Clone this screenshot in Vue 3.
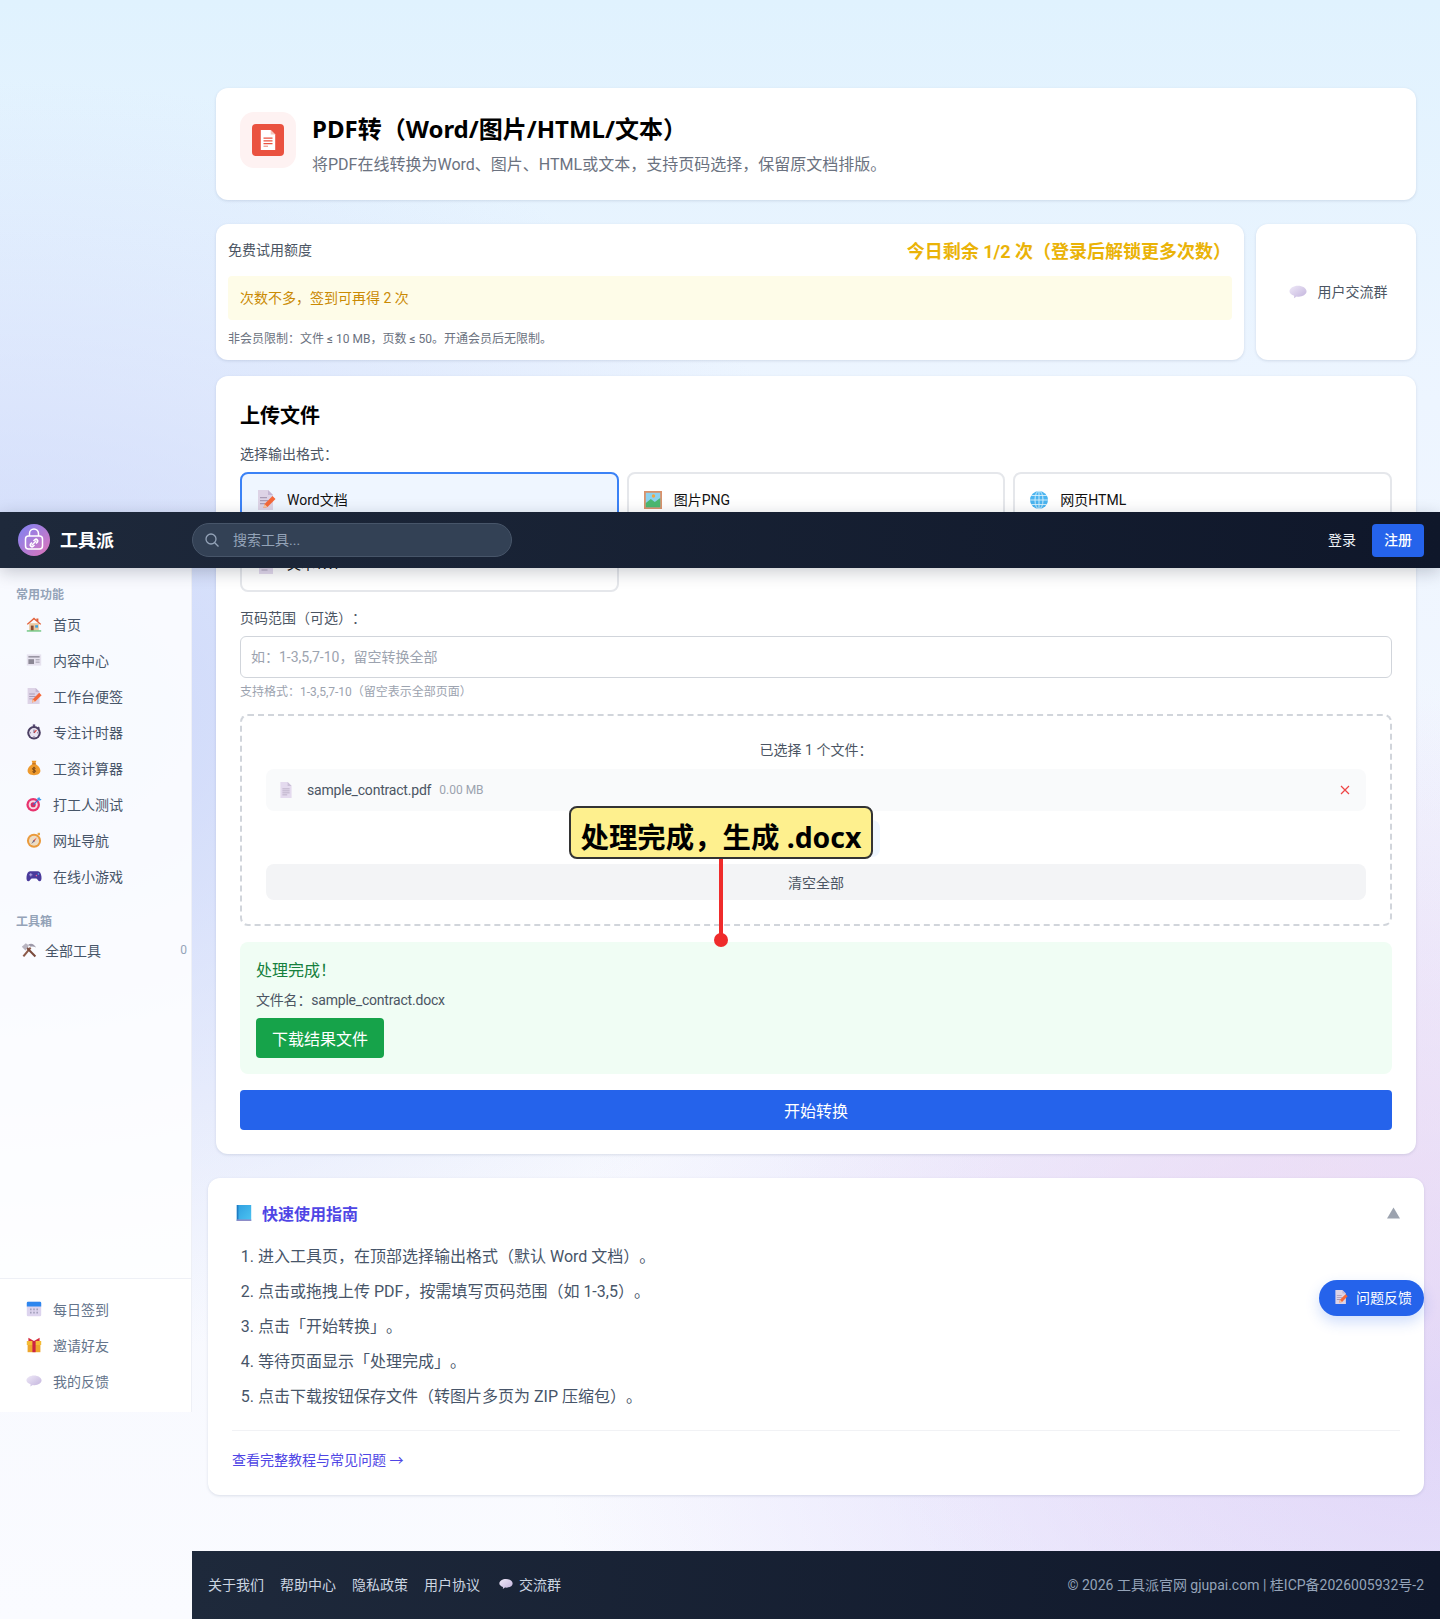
<script setup>
const navMain = [
  { icon: 'home', label: '首页' },
  { icon: 'news', label: '内容中心' },
  { icon: 'memo', label: '工作台便签' },
  { icon: 'timer', label: '专注计时器' },
  { icon: 'money', label: '工资计算器' },
  { icon: 'target', label: '打工人测试' },
  { icon: 'compass', label: '网址导航' },
  { icon: 'game', label: '在线小游戏' }
]
const navBottom = [
  { icon: 'calendar', label: '每日签到' },
  { icon: 'gift', label: '邀请好友' },
  { icon: 'bubble', label: '我的反馈' }
]
const formats = [
  { icon: 'memo', label: 'Word文档', active: true },
  { icon: 'image', label: '图片PNG' },
  { icon: 'globe', label: '网页HTML' },
  { icon: 'doc', label: '文本TXT' }
]
const steps = [
  '进入工具页，在顶部选择输出格式（默认 Word 文档）。',
  '点击或拖拽上传 PDF，按需填写页码范围（如 1-3,5）。',
  '点击「开始转换」。',
  '等待页面显示「处理完成」。',
  '点击下载按钮保存文件（转图片多页为 ZIP 压缩包）。'
]
const footerLinks = ['关于我们', '帮助中心', '隐私政策', '用户协议']
</script>

<template>
  <div class="page">
    <svg class="defs" width="0" height="0" aria-hidden="true">
      <defs>
        <linearGradient id="bubble-fill" x1="0" y1="0" x2="1" y2="1">
          <stop offset="0" stop-color="#efe9f8" />
          <stop offset="1" stop-color="#c2b3dc" />
        </linearGradient>
        <linearGradient id="book-fill" x1="0" y1="0" x2="1" y2="1">
          <stop offset="0" stop-color="#2f9fe0" />
          <stop offset="1" stop-color="#4cc4f2" />
        </linearGradient>
        <linearGradient id="logo-fill" x1="0" y1="0" x2="1" y2="1">
          <stop offset="0" stop-color="#7c83f4" />
          <stop offset="1" stop-color="#e074b8" />
        </linearGradient>
      </defs>
      <symbol id="i-home" viewBox="0 0 20 20">
        <rect x="4" y="9" width="12" height="9" fill="#eac8a0" />
        <path d="M1 10 10 2l3 2.600V3h2.500v3.800L19 10l-1.200 1L10 4.400 2.200 11z" fill="#e2603a" />
        <rect x="6" y="12" width="3.500" height="6" fill="#8a4b32" />
        <rect x="11.500" y="11.500" width="3.500" height="3" fill="#3aa0e0" />
        <rect x="1" y="18" width="18" height="1.400" fill="#4cb860" />
      </symbol>
      <symbol id="i-news" viewBox="0 0 20 20">
        <rect x="1" y="3" width="18" height="14" fill="#e6e2ee" />
        <rect x="3" y="5" width="14" height="2" fill="#9a96a4" />
        <rect x="3" y="9" width="7" height="6" fill="#8b8794" />
        <rect x="12" y="9" width="5" height="1.400" fill="#aaa6b4" />
        <rect x="12" y="12" width="5" height="1.400" fill="#aaa6b4" />
      </symbol>
      <symbol id="i-memo" viewBox="0 0 20 20">
        <path d="M2 0h10l5 5v15H2z" fill="#ddd3e6" />
        <path d="M12 0l5 5h-5z" fill="#c4b6d2" />
        <path d="M4 7h7v1.200H4zM4 10h8v1.200H4zM4 13h5v1.200H4z" fill="#a99bb5" />
        <path d="M7.500 18l1-4 8-8 3 3-8 8z" fill="#f4683a" />
        <path d="M7.500 18l1-4 3 3z" fill="#f6c6a0" />
      </symbol>
      <symbol id="i-timer" viewBox="0 0 20 20">
        <rect x="8.500" y="0.500" width="3" height="3" fill="#5b4c78" />
        <path d="M15.500 3l2 2-1.500 1.500-2-2z" fill="#5b4c78" />
        <circle cx="10" cy="11" r="8.500" fill="#4b3f63" />
        <circle cx="10" cy="11" r="6" fill="#e9e3f1" />
        <path d="M10 11l3-3.400" stroke="#e0433c" stroke-width="1.500" />
        <path d="M10 11V7M10 15v1M5 11h1M14 11h1" stroke="#4b3f63" stroke-width="1" />
      </symbol>
      <symbol id="i-money" viewBox="0 0 20 20">
        <path d="M7 1h6l-1.500 4c3.500 1.500 6.500 5 6.500 8.500 0 3.500-3 5.500-8 5.500s-8-2-8-5.500C2 10 5 6.500 8.500 5z" fill="#ee9a2e" />
        <path d="M7.500 4.800h5" stroke="#b8681e" stroke-width="1.300" />
        <path d="M12 10.500c-1-1-4-1-4 .6 0 1.800 4 1 4 2.800 0 1.600-3 1.600-4 .6M10 8.500v8" stroke="#5e3312" stroke-width="1" fill="none" />
      </symbol>
      <symbol id="i-target" viewBox="0 0 20 20">
        <circle cx="9" cy="11" r="8.500" fill="#e8336e" />
        <circle cx="9" cy="11" r="5.700" fill="#f4d8e4" />
        <circle cx="9" cy="11" r="3.200" fill="#d62c62" />
        <path d="M9 11 16 4" stroke="#3a6fd8" stroke-width="1.500" />
        <path d="M14 2.500l1 2.500 2.500 1 2-2-2-.5-.5-2z" fill="#3f9be8" />
      </symbol>
      <symbol id="i-compass" viewBox="0 0 20 20">
        <circle cx="10" cy="11" r="8.800" fill="#ea9a3c" />
        <circle cx="10" cy="11" r="6.300" fill="#ecdcc4" />
        <path d="M13.500 7l-3 5-1.500-1.500z" fill="#e0443c" />
        <path d="M6.500 15l3-5 1.500 1.500z" fill="#6a6a88" />
        <rect x="14.500" y="1" width="3" height="3" fill="#e8a848" />
      </symbol>
      <symbol id="i-game" viewBox="0 0 20 20">
        <path d="M5 4h10c2.500 0 3.800 3 4.300 6.500.4 3.500-.3 6-2.300 6-1.800 0-2.500-2.800-4-3.500H7c-1.500.7-2.200 3.500-4 3.500-2 0-2.700-2.500-2.300-6C1.200 7 2.500 4 5 4z" fill="#4a3a9c" />
        <path d="M4 8.500h4M6 6.500v4" stroke="#b8aee8" stroke-width="1.200" />
        <circle cx="13" cy="9.500" r="1" fill="#e8609a" />
        <circle cx="15.500" cy="7.500" r="1" fill="#58b8f0" />
      </symbol>
      <symbol id="i-tools" viewBox="0 0 20 20">
        <path d="M3 18 12 7" stroke="#8c5a4a" stroke-width="2.600" />
        <path d="M18 18 7 7" stroke="#7a4a3c" stroke-width="2.600" />
        <path d="M1 6l5-4.500 4 3-4.500 6z" fill="#b8b4c0" />
        <path d="M9 3c4-2 7-1 10 4-2.500-1.500-5-2-7-1z" fill="#9c98a8" />
      </symbol>
      <symbol id="i-calendar" viewBox="0 0 20 20">
        <rect x="1" y="1" width="18" height="18" rx="1.500" fill="#ddd4ee" />
        <path d="M1 7V2.500A1.500 1.500 0 0 1 2.500 1h15A1.500 1.500 0 0 1 19 2.500V7z" fill="#2e86ee" />
        <path d="M5 9.500h2v2H5zM9 9.500h2v2H9zM13 9.500h2v2h-2zM5 13.500h2v2H5zM9 13.500h2v2H9zM13 13.500h2v2h-2z" fill="#a4a0bc" />
      </symbol>
      <symbol id="i-gift" viewBox="0 0 20 20">
        <rect x="2" y="9" width="16" height="10" fill="#eda62c" />
        <rect x="1" y="5" width="18" height="5" fill="#f4bc36" />
        <rect x="8" y="5" width="4" height="14" fill="#cc2244" />
        <path d="M3 1l7 4 7-4v4H3z" fill="#d62c3c" />
      </symbol>
      <symbol id="i-bubble" viewBox="0 0 20 20">
        <path d="M10 3c5 0 9.500 2.700 9.500 6.200s-4.500 6-8.500 6c-1 0-1.800 0-2.500-.2L5.500 17l.2-2.800C3 13.200 .5 11.500 .5 9.200.5 5.700 5 3 10 3z" fill="url(#bubble-fill)" />
      </symbol>
      <symbol id="i-doc" viewBox="0 0 20 20">
        <path d="M3 0h9l5 5v15H3z" fill="#e4daee" />
        <path d="M12 0l5 5h-5z" fill="#cbbfd8" />
        <path d="M5.500 8h9v1h-9zM5.500 10.500h9v1h-9zM5.500 13h9v1h-9zM5.500 15.500h6v1h-6z" fill="#b0a4bc" />
      </symbol>
      <symbol id="i-image" viewBox="0 0 20 20">
        <rect x="1" y="1" width="18" height="18" fill="#d9926b" />
        <rect x="2.800" y="2.800" width="14.400" height="14.400" fill="#8ed2ee" />
        <path d="M2.800 13l5-4 4 3 5.400-4v9.200H2.800z" fill="#4cb870" />
        <circle cx="10.500" cy="6" r="1.700" fill="#f2a640" />
      </symbol>
      <symbol id="i-globe" viewBox="0 0 20 20">
        <circle cx="10" cy="10" r="9" fill="#4ab4f0" />
        <g fill="none" stroke="#d8f0fc" stroke-width="0.900">
          <ellipse cx="10" cy="10" rx="4" ry="9" />
          <path d="M10 1v18M1 10h18M2.200 5.500h15.600M2.200 14.500h15.600" />
        </g>
      </symbol>
      <symbol id="i-book" viewBox="0 0 20 20">
        <rect x="1" y="0" width="18" height="20" fill="url(#book-fill)" />
        <rect x="1" y="0" width="2" height="20" fill="#1f7cc4" />
        <rect x="1" y="18" width="18" height="2" fill="#8d8cc8" />
      </symbol>
    </svg>

    <aside class="sidebar">
      <div class="nav-top">
        <p class="nav-title">常用功能</p>
        <a v-for="item in navMain" :key="item.label" class="nav-item">
          <svg class="nav-icon"><use :href="'#i-' + item.icon" /></svg>
          <span>{{ item.label }}</span>
        </a>
        <p class="nav-title nav-title-2">工具箱</p>
        <a class="nav-item nav-tools">
          <svg class="nav-icon"><use href="#i-tools" /></svg>
          <span>全部工具</span>
          <em class="count">0</em>
        </a>
      </div>
      <div class="nav-bottom">
        <a v-for="item in navBottom" :key="item.label" class="nav-item muted">
          <svg class="nav-icon"><use :href="'#i-' + item.icon" /></svg>
          <span>{{ item.label }}</span>
        </a>
      </div>
    </aside>

    <div class="main">
      <div class="content">
        <section class="card head-card">
          <div class="head-icon">
            <div class="head-icon-inner">
              <svg viewBox="0 0 20 24" width="18" height="22">
                <path d="M2 1h11l5 5v17H2z" fill="#fff" />
                <path d="M13 1l5 5h-5z" fill="#f7c4bb" />
                <path d="M5 10h10M5 13h10M5 16h10" stroke="#e9523f" stroke-width="1.300" />
                <path d="M5 19h5" stroke="#f2a79c" stroke-width="1.600" />
              </svg>
            </div>
          </div>
          <div>
            <h1>PDF转（Word/图片/HTML/文本）</h1>
            <p class="head-sub">将PDF在线转换为Word、图片、HTML或文本，支持页码选择，保留原文档排版。</p>
          </div>
        </section>

        <div class="quota-row">
          <section class="card quota-card">
            <div class="quota-top">
              <span class="quota-name">免费试用额度</span>
              <strong>今日剩余 1/2 次（登录后解锁更多次数）</strong>
            </div>
            <div class="quota-tip">次数不多，签到可再得 2 次</div>
            <p class="quota-note">非会员限制：文件 ≤ 10 MB，页数 ≤ 50。开通会员后无限制。</p>
          </section>
          <section class="card group-card">
            <svg class="group-icon"><use href="#i-bubble" /></svg>
            <span>用户交流群</span>
          </section>
        </div>

        <section class="card upload-card">
          <h2>上传文件</h2>
          <p class="label">选择输出格式：</p>
          <div class="formats">
            <div v-for="f in formats" :key="f.label" class="format" :class="{ active: f.active }">
              <svg class="format-icon"><use :href="'#i-' + f.icon" /></svg>
              <span>{{ f.label }}</span>
            </div>
          </div>

          <p class="label range-label">页码范围（可选）：</p>
          <input class="range-input" type="text" placeholder="如：1-3,5,7-10，留空转换全部" />
          <p class="hint">支持格式：1-3,5,7-10（留空表示全部页面）</p>

          <div class="dropzone">
            <p class="picked">已选择 1 个文件：</p>
            <div class="file-row">
              <svg class="file-icon"><use href="#i-doc" /></svg>
              <span class="file-name">sample_contract.pdf</span>
              <span class="file-size">0.00 MB</span>
              <svg class="file-del" viewBox="0 0 10 10" width="10" height="10">
                <path d="M1 1l8 8M9 1l-8 8" stroke="#ef4444" stroke-width="1.200" />
              </svg>
            </div>
            <div class="add-wrap"><div class="btn-add"></div></div>
            <button class="btn-clear">清空全部</button>
          </div>

          <div class="result">
            <p class="result-title">处理完成！</p>
            <p class="result-file">文件名：sample_contract.docx</p>
            <button class="btn-download">下载结果文件</button>
          </div>

          <button class="btn-start">开始转换</button>
        </section>
      </div>

      <section class="card guide">
        <div class="guide-head">
          <svg class="guide-icon"><use href="#i-book" /></svg>
          <span>快速使用指南</span>
          <svg class="guide-arrow" viewBox="0 0 14 12"><polygon points="7,0 14,12 0,12" fill="#9ca3af" /></svg>
        </div>
        <ol class="guide-list">
          <li v-for="s in steps" :key="s">{{ s }}</li>
        </ol>
        <div class="guide-foot">
          <a>查看完整教程与常见问题 →</a>
        </div>
      </section>

      <footer class="footer">
        <div class="footer-links">
          <a v-for="l in footerLinks" :key="l">{{ l }}</a>
          <a class="footer-group">
            <svg class="footer-icon"><use href="#i-bubble" /></svg>
            交流群
          </a>
        </div>
        <span class="copyright">© 2026 工具派官网 gjupai.com | 桂ICP备2026005932号-2</span>
      </footer>
    </div>

    <header class="topbar">
      <div class="logo">
        <svg viewBox="0 0 32 32" width="32" height="32">
          <circle cx="16" cy="16" r="16" fill="url(#logo-fill)" />
          <g fill="none" stroke="#fff" stroke-width="1.500">
            <path d="M11.500 12V9.500a4.500 4.500 0 0 1 9 0V12" />
            <rect x="7.500" y="12" width="17" height="13" rx="3" />
            <path d="M13.500 21.500l5-5" />
            <path d="M14 18.500l-1.500 1.500a1.800 1.800 0 0 0 2.500 2.500l1.500-1.500M18 19.500l1.500-1.500a1.800 1.800 0 0 0-2.500-2.500L15.500 17" />
          </g>
        </svg>
        <span>工具派</span>
      </div>
      <div class="search">
        <svg viewBox="0 0 16 16" width="16" height="16" fill="none" stroke="#94a3b8" stroke-width="1.300">
          <circle cx="7" cy="7" r="5" />
          <path d="M10.700 10.700 14.500 14.500" />
        </svg>
        <span>搜索工具...</span>
      </div>
      <div class="auth">
        <a>登录</a>
        <button>注册</button>
      </div>
    </header>

    <div class="callout">
      <div class="callout-box">处理完成，生成 .docx</div>
      <div class="callout-line"></div>
      <div class="callout-dot"></div>
    </div>

    <button class="feedback">
      <svg class="feedback-icon"><use href="#i-memo" /></svg>
      问题反馈
    </button>
  </div>
</template>

<style>
body {
  margin: 0;
}
</style>

<style scoped>
.page {
  position: relative;
  display: flex;
  min-height: 1619px;
  overflow: hidden;
  font-family: Roboto, "Noto Sans CJK SC", sans-serif;
  text-spacing-trim: space-all;
  color: #111;
  background:
    radial-gradient(560px 520px at 1330px 1190px, rgba(244, 220, 240, 0.5), rgba(244, 220, 240, 0) 100%),
    radial-gradient(900px 700px at 1440px 1400px, rgba(215, 208, 250, 0.9), rgba(215, 208, 250, 0) 100%),
    radial-gradient(900px 640px at 0 720px, rgba(196, 208, 248, 0.85), rgba(196, 208, 248, 0) 100%),
    linear-gradient(180deg, #e0f2fe 0, #edf5ff 400px, #f6f8fe 1100px, #fafbff 1619px);
}

.defs {
  position: absolute;
}

p,
h1,
h2 {
  margin: 0;
}

.sidebar {
  flex: none;
  width: 191px;
  height: 844px;
  margin-top: 568px;
  display: flex;
  flex-direction: column;
  justify-content: space-between;
  background: rgba(255, 255, 255, 0.85);
  border-right: 1px solid #eef0f6;
}

.nav-top {
  padding-top: 17px;
}

.nav-title {
  padding-left: 16px;
  font-size: 12px;
  line-height: 20px;
  font-weight: 700;
  color: #94a3b8;
}

.nav-title-2 {
  margin-top: 18px;
}

.nav-item {
  display: flex;
  align-items: center;
  gap: 11px;
  height: 36px;
  padding-left: 26px;
  font-size: 14px;
  color: #475569;
}

.nav-icon {
  flex: none;
  width: 16px;
  height: 16px;
}

.nav-top .nav-title + .nav-item {
  margin-top: 1px;
}

.nav-top .nav-title + .nav-tools {
  margin-top: 0;
  gap: 8px;
  padding-left: 21px;
  padding-right: 4px;
}

.count {
  margin-left: auto;
  font-style: normal;
  font-size: 12px;
  color: #94a3b8;
}

.nav-bottom {
  padding: 12px 0 13px;
  border-top: 1px solid #eef0f6;
  background: #fff;
}

.muted {
  color: #64748b;
}

.main {
  flex: 1;
  min-width: 0;
  display: flex;
  flex-direction: column;
}

.content {
  padding: 88px 24px 0;
  display: flex;
  flex-direction: column;
}

.card {
  background: #fff;
  border-radius: 12px;
  box-shadow: 0 1px 3px rgba(60, 80, 120, 0.16);
}

.head-card {
  display: flex;
  align-items: flex-start;
  gap: 16px;
  height: 112px;
  padding: 24px;
  box-sizing: border-box;
}

.head-icon {
  flex: none;
  width: 56px;
  height: 56px;
  border-radius: 14px;
  background: #fef2f2;
  display: flex;
  align-items: center;
  justify-content: center;
}

.head-icon-inner {
  width: 32px;
  height: 32px;
  border-radius: 4px;
  background: #ea5240;
  display: flex;
  align-items: center;
  justify-content: center;
}

h1 {
  margin-top: 1px;
  font-family: "Noto Sans", "Noto Sans CJK SC", sans-serif;
  font-size: 24px;
  line-height: 32px;
  font-weight: 700;
  color: #000;
}

.head-sub {
  margin-top: 8px;
  font-size: 16px;
  line-height: 24px;
  color: #6b7280;
}

.quota-row {
  display: flex;
  gap: 12px;
  margin-top: 24px;
}

.quota-card {
  flex: 1;
  height: 136px;
  padding: 12px;
  box-sizing: border-box;
}

.quota-top {
  display: flex;
  justify-content: space-between;
  align-items: center;
  height: 28px;
  font-size: 14px;
  color: #4b5563;
}

.quota-name {
  margin-bottom: 2px;
}

.quota-top strong {
  font-size: 18px;
  font-weight: 700;
  color: #eab308;
  padding-right: 1px;
}

.quota-tip {
  margin-top: 12px;
  height: 44px;
  line-height: 44px;
  padding: 0 12px;
  border-radius: 4px;
  background: #fefce8;
  font-size: 14px;
  color: #ca8a04;
}

.quota-note {
  margin-top: 10px;
  font-size: 12px;
  line-height: 18px;
  color: #6b7280;
}

.group-card {
  flex: none;
  width: 160px;
  display: flex;
  align-items: center;
  justify-content: center;
  gap: 11px;
  padding-left: 4px;
  box-sizing: border-box;
  font-size: 14px;
  color: #4b5563;
}

.group-card span {
  margin-bottom: 2px;
}

.group-icon {
  width: 18px;
  height: 18px;
}

.upload-card {
  margin-top: 16px;
  padding: 24px;
  height: 778px;
  box-sizing: border-box;
}

h2 {
  margin-top: 2px;
  font-size: 20px;
  line-height: 28px;
  font-weight: 700;
  color: #000;
}

.label {
  margin-top: 14px;
  font-size: 14px;
  line-height: 20px;
  color: #4b5563;
}

.formats {
  display: grid;
  grid-template-columns: repeat(3, 1fr);
  gap: 8px;
  margin-top: 8px;
}

.format {
  display: flex;
  align-items: center;
  gap: 11px;
  height: 56px;
  padding: 0 16px 0 14px;
  box-sizing: border-box;
  border: 2px solid #e5e7eb;
  border-radius: 8px;
  font-size: 14px;
  color: #111;
}

.format span {
  margin-bottom: 2px;
}

.format.active {
  border-color: #3b82f6;
  background: #eff6ff;
}

.format-icon {
  width: 20px;
  height: 20px;
}

.range-label {
  margin-top: 16px;
}

.range-input {
  display: block;
  width: 100%;
  height: 42px;
  margin-top: 8px;
  padding: 0 10px 1px;
  box-sizing: border-box;
  border: 1px solid #d1d5db;
  border-radius: 6px;
  font-family: inherit;
  font-size: 14px;
  outline: none;
}

.range-input::placeholder {
  color: #9ca3af;
}

.hint {
  margin-top: 5px;
  font-size: 12px;
  line-height: 18px;
  color: #9ca3af;
}

.dropzone {
  margin-top: 13px;
  padding: 24px;
  border: 2px dashed #d1d5db;
  border-radius: 8px;
  text-align: center;
}

.picked {
  font-size: 14px;
  line-height: 20px;
  color: #4b5563;
}

.file-row {
  display: flex;
  align-items: center;
  height: 42px;
  margin-top: 9px;
  padding: 0 12px;
  border-radius: 8px;
  background: #f9fafb;
}

.file-icon {
  flex: none;
  width: 16px;
  height: 16px;
}

.file-name {
  margin-left: 13px;
  font-size: 14px;
  letter-spacing: -0.2px;
  color: #4b5563;
}

.file-size {
  margin-left: 8px;
  font-size: 12px;
  color: #9ca3af;
}

.file-del {
  margin-left: auto;
  margin-right: 4px;
}

.add-wrap {
  margin-top: 9px;
}

button {
  border: none;
  font-family: inherit;
  cursor: pointer;
}

.btn-add {
  width: 128px;
  height: 37px;
  margin: 0 auto;
  border-radius: 8px;
  background: #eff6ff;
}

.btn-clear {
  display: block;
  width: 100%;
  height: 36px;
  margin-top: 7px;
  padding-bottom: 2px;
  border-radius: 8px;
  background: #f3f4f6;
  font-size: 14px;
  color: #4b5563;
}

.result {
  margin-top: 16px;
  padding: 17px 16px 16px;
  border-radius: 8px;
  background: #f0fdf4;
}

.result-title {
  font-size: 16px;
  line-height: 24px;
  color: #15803d;
}

.result-file {
  margin-top: 7px;
  font-size: 14px;
  line-height: 20px;
  letter-spacing: -0.2px;
  color: #4b5563;
}

.btn-download {
  display: block;
  width: 128px;
  height: 40px;
  margin-top: 8px;
  padding-bottom: 2px;
  border-radius: 4px;
  background: #16a34a;
  font-size: 16px;
  color: #fff;
}

.btn-start {
  display: block;
  width: 100%;
  height: 40px;
  margin-top: 16px;
  padding-bottom: 2px;
  border-radius: 4px;
  background: #2563eb;
  font-size: 16px;
  color: #fff;
}

.guide {
  margin: 24px 16px 0;
  padding: 23px 24px 24px;
  height: 317px;
  box-sizing: border-box;
}

.guide-head {
  display: flex;
  align-items: center;
  gap: 10px;
  height: 24px;
  padding-left: 4px;
  font-size: 16px;
  font-weight: 700;
  color: #4f46e5;
}

.guide-icon {
  width: 16px;
  height: 16px;
}

.guide-arrow {
  width: 13px;
  height: 12px;
  margin-left: auto;
}

.guide-list {
  margin: 14px 0 0;
  padding: 0 0 0 26px;
  font-size: 16px;
  line-height: 35px;
  color: #475569;
}

.guide-foot {
  margin-top: 16px;
  padding-top: 19px;
  border-top: 1px solid #f1f2f5;
  font-size: 14px;
  line-height: 20px;
  color: #4f46e5;
}

.footer {
  display: flex;
  align-items: center;
  justify-content: space-between;
  height: 68px;
  margin-top: 56px;
  padding: 0 16px 2px;
  box-sizing: border-box;
  background: linear-gradient(90deg, #1e293b, #0f172a);
  font-size: 14px;
}

.footer-links {
  display: flex;
  align-items: center;
  gap: 16px;
  color: #cbd5e1;
}

.footer-group {
  display: flex;
  align-items: center;
  gap: 6px;
  margin-left: 3px;
}

.footer-icon {
  width: 14px;
  height: 14px;
}

.copyright {
  color: #94a3b8;
}

.topbar {
  position: absolute;
  top: 512px;
  left: 0;
  right: 0;
  height: 56px;
  display: flex;
  align-items: center;
  padding: 0 16px 0 18px;
  background: linear-gradient(90deg, #1e293b, #0f172a);
  box-shadow: 0 4px 16px rgba(15, 23, 42, 0.22);
}

.logo {
  display: flex;
  align-items: center;
  gap: 10px;
  width: 174px;
  font-size: 18px;
  font-weight: 700;
  color: #fff;
}

.logo span {
  margin-bottom: 2px;
}

.search {
  display: flex;
  align-items: center;
  gap: 13px;
  width: 320px;
  height: 34px;
  padding: 0 11px;
  box-sizing: border-box;
  border: 1px solid #475569;
  border-radius: 17px;
  background: #334155;
  font-size: 14px;
  color: #94a3b8;
}

.search span {
  margin-bottom: 2px;
}

.auth {
  margin-left: auto;
  display: flex;
  align-items: center;
  gap: 16px;
  font-size: 14px;
  color: #f1f5f9;
}

.auth a {
  margin-bottom: 3px;
}

.auth button {
  width: 52px;
  height: 33px;
  padding-bottom: 3px;
  border-radius: 4px;
  background: #2563eb;
  font-size: 14px;
  font-weight: 500;
  color: #fff;
}

.callout {
  position: absolute;
  top: 806px;
  left: 569px;
  width: 304px;
}

.callout-box {
  box-sizing: border-box;
  height: 53px;
  border: 2px solid #333;
  border-radius: 8px;
  background: rgba(254, 240, 138, 0.97);
  font-family: "Noto Sans", "Noto Sans CJK SC", sans-serif;
  font-size: 28.4px;
  line-height: 58px;
  font-weight: 700;
  text-align: center;
  white-space: nowrap;
  color: #000;
}

.callout-line {
  position: absolute;
  top: 53px;
  left: 150px;
  width: 4px;
  height: 78px;
  background: #ef2b2b;
}

.callout-dot {
  position: absolute;
  top: 127px;
  left: 145px;
  width: 14px;
  height: 14px;
  border-radius: 50%;
  background: #ef2b2b;
}

.feedback {
  position: absolute;
  top: 1280px;
  left: 1319px;
  width: 105px;
  height: 36px;
  display: flex;
  align-items: center;
  gap: 8px;
  padding: 0 0 2px 15px;
  border-radius: 18px;
  background: #2563eb;
  box-shadow: 0 6px 14px rgba(37, 99, 235, 0.22);
  font-size: 14px;
  color: #fff;
}

.feedback-icon {
  flex: none;
  width: 14px;
  height: 14px;
}
</style>
